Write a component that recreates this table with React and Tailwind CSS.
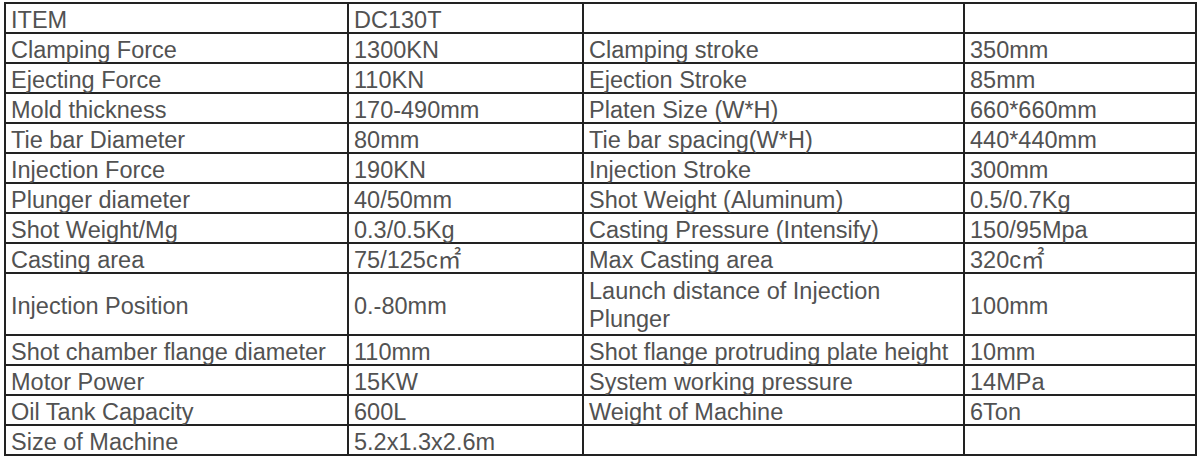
const rows = [
  ['ITEM', 'DC130T', '', ''],
  ['Clamping Force', '1300KN', 'Clamping stroke', '350mm'],
  ['Ejecting Force', '110KN', 'Ejection Stroke', '85mm'],
  ['Mold thickness', '170-490mm', 'Platen Size (W*H)', '660*660mm'],
  ['Tie bar Diameter', '80mm', 'Tie bar spacing(W*H)', '440*440mm'],
  ['Injection Force', '190KN', 'Injection Stroke', '300mm'],
  ['Plunger diameter', '40/50mm', 'Shot Weight (Aluminum)', '0.5/0.7Kg'],
  ['Shot Weight/Mg', '0.3/0.5Kg', 'Casting Pressure (Intensify)', '150/95Mpa'],
  ['Casting area', '75/125c㎡', 'Max Casting area', '320c㎡'],
  ['Injection Position', '0.-80mm', 'LAUNCH', '100mm'],
  ['Shot chamber flange diameter', '110mm', 'Shot flange protruding plate height', '10mm'],
  ['Motor Power', '15KW', 'System working pressure', '14MPa'],
  ['Oil Tank Capacity', '600L', 'Weight of Machine', '6Ton'],
  ['Size of Machine', '5.2x1.3x2.6m', '', ''],
]

function Cell({ children }) {
  return (
    <td className="border-2 border-[#222] pl-[5px] pr-1 pt-[4px] pb-0 align-middle whitespace-nowrap leading-[22px]">
      {children === 'LAUNCH' ? (
        <span className="block leading-[28px] -mt-[2px]">
          Launch distance of Injection
          <br />
          Plunger
        </span>
      ) : (
        children
      )}
    </td>
  )
}

export default function App() {
  return (
    <div className="w-[1200px] h-[460px] bg-white pt-[2px] pl-[4px]">
      <table
        className="table-fixed border-collapse text-[#525252] text-[23.5px]"
        style={{ fontFamily: '"Liberation Sans", Arial, "Noto Sans CJK SC", sans-serif' }}
      >
        <colgroup>
          <col className="w-[343px]" />
          <col className="w-[235px]" />
          <col className="w-[381px]" />
          <col className="w-[232px]" />
        </colgroup>
        <tbody>
          {rows.map((r, i) => (
            <tr key={i} className={r[2] === 'LAUNCH' ? 'h-[62px]' : 'h-[30px]'}>
              {r.map((c, j) => (
                <Cell key={j}>{c}</Cell>
              ))}
            </tr>
          ))}
        </tbody>
      </table>
    </div>
  )
}
